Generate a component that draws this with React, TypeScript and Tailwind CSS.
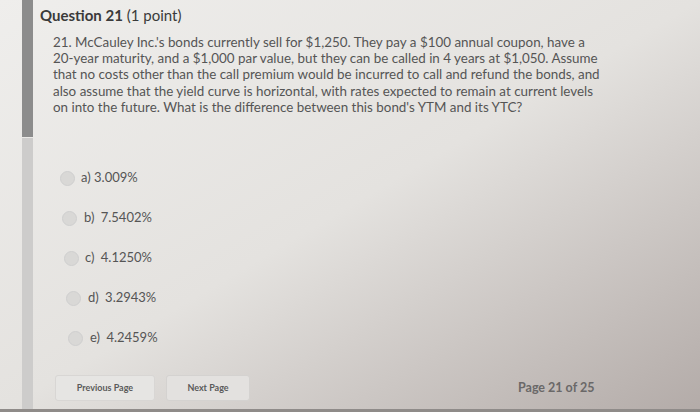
const options = [
    { label: 'a)', value: '3.009%', ml: 'ml-[27px]', gap: 'gap-[6px]' },
    { label: 'b)', value: '7.5402%', ml: 'ml-[29px]', gap: 'gap-[7px]' },
    { label: 'c)', value: '4.1250%', ml: 'ml-[31px]', gap: 'gap-[6px]' },
    { label: 'd)', value: '3.2943%', ml: 'ml-[33px]', gap: 'gap-[7px]' },
    { label: 'e)', value: '4.2459%', ml: 'ml-[35px]', gap: 'gap-[7px]' },
];

export default function App() {
    return (
        <div className="relative flex h-[412px] w-[700px] overflow-hidden bg-linear-to-br from-[#efeeec] via-[#e4e2df] to-[#b3aba8] font-['Lato','Noto_Sans',sans-serif]">
            {/* left rail */}
            <div className="ml-[22px] flex w-[11px] flex-col">
                <div className="h-[137px] bg-[#8c8c8c]" />
                <div className="mt-px flex-1 bg-[#cdcccb]" />
            </div>

            <div className="flex flex-1 flex-col">
                <h1 className="ml-[7px] mt-[6px] text-[15px] leading-[18px] text-[#3a3a3a]">
                    <span className="font-bold">Question 21</span>{' '}
                    <span>(1 point)</span>
                </h1>

                <p className="ml-[20px] mt-[10px] text-[13.4px] leading-[16.2px] text-[#555]">
                    21. McCauley Inc.'s bonds currently sell for $1,250. They
                    pay a $100 annual coupon, have a
                    <br />
                    20-year maturity, and a $1,000 par value, but they can be
                    called in 4 years at $1,050. Assume
                    <br />
                    that no costs other than the call premium would be incurred
                    to call and refund the bonds, and
                    <br />
                    also assume that the yield curve is horizontal, with rates
                    expected to remain at current levels
                    <br />
                    on into the future. What is the difference between this
                    bond's YTM and its YTC?
                </p>

                <div className="mt-[55px] flex flex-col gap-[24px]">
                    {options.map((o) => (
                        <label
                            key={o.label}
                            className={`flex h-[16px] items-center ${o.ml} ${o.gap} text-[13px] text-[#555]`}
                        >
                            <span className="h-[15px] w-[15px] rounded-full border border-[#cfcfcf] bg-[#d9d8d6]" />
                            <span>
                                {o.label}{' '}
                                {o.label !== 'a)' && <span className="ml-[3px]" />}
                                {o.value}
                            </span>
                        </label>
                    ))}
                </div>

                <div className="mt-auto mb-[11px] flex items-center">
                    <button className="ml-[22px] h-[26px] w-[100px] rounded-[3px] border border-[#d8d6d4] bg-[#e6e5e3] text-[9px] font-bold text-[#5a5a5a]">
                        Previous Page
                    </button>
                    <button className="ml-[11px] h-[26px] w-[84px] rounded-[3px] border border-[#d4d2d0] bg-[#e3e1df] text-[9px] font-bold text-[#5a5a5a]">
                        Next Page
                    </button>
                    <span className="ml-[268px] text-[12.5px] font-bold text-[#6a6868]">
                        Page 21 of 25
                    </span>
                </div>
            </div>

            <div className="absolute bottom-0 left-0 h-[3px] w-full bg-[#8f8b89]" />
        </div>
    );
}
